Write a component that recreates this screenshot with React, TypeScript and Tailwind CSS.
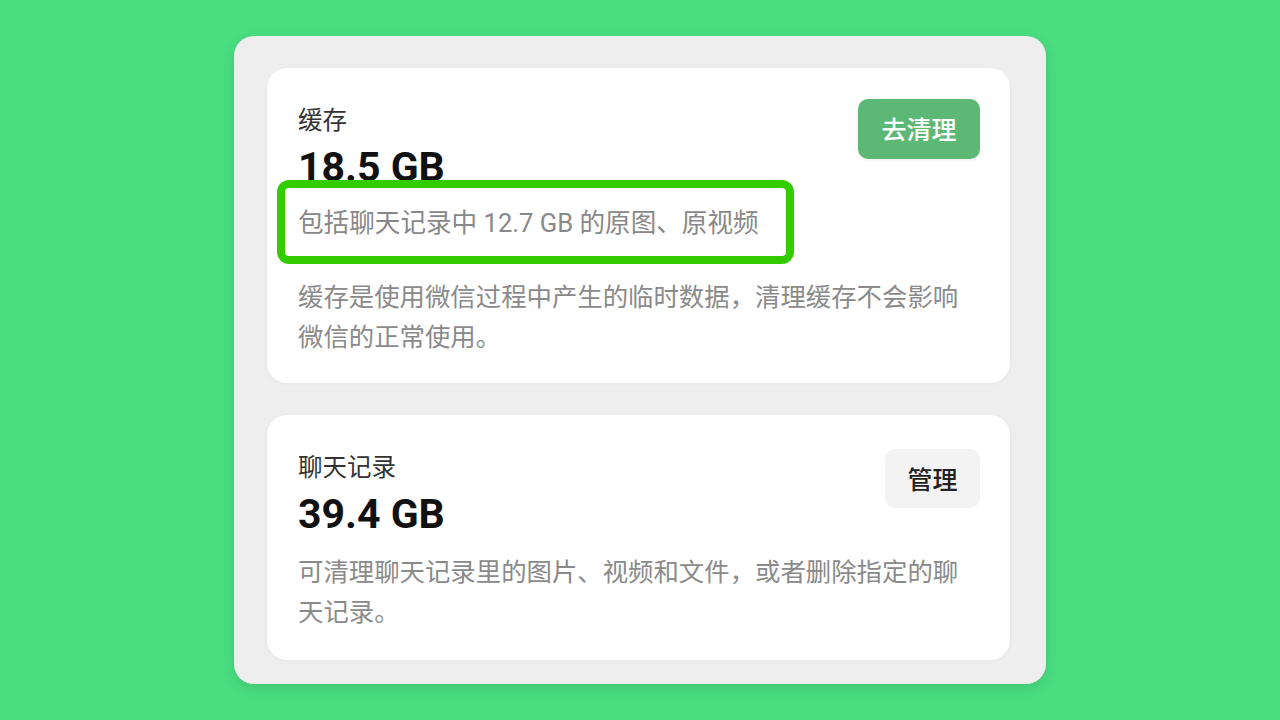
import React from 'react';

const cjk = "font-['Noto_Sans_CJK_SC',sans-serif]";

function StorageCard({
  title,
  size,
  action,
  primary,
  note,
  lines,
}: {
  title: string;
  size: string;
  action: string;
  primary?: boolean;
  note?: string;
  lines: string;
}) {
  return (
    <div
      className={`relative bg-white rounded-[20px] pl-[31px] pr-[30px] pt-[31px] ${
        note ? 'pb-[28px]' : 'pb-[30px]'
      } shadow-[0_1px_4px_rgba(0,0,0,0.04)]`}
    >
      <div className="flex items-start justify-between">
        <div>
          <div className="text-[24.5px] leading-[40px] mb-[4px] text-[#333]">{title}</div>
          <div className="font-['Roboto','Noto_Sans_CJK_SC',sans-serif] font-bold text-[41px] leading-[48px] text-[#111]">
            {size}
          </div>
        </div>
        {primary ? (
          <button className="w-[122px] h-[60px] rounded-[10px] bg-[#5cb874] text-white text-[25px] font-medium shadow-[0_1px_3px_rgba(0,0,0,0.08)]">
            {action}
          </button>
        ) : (
          <button className="mt-[3px] w-[95px] h-[59px] rounded-[10px] bg-[#f3f3f3] text-[#222] text-[25px] font-medium">
            {action}
          </button>
        )}
      </div>
      {note && (
        <>
          <div className="mt-[12px] font-['Roboto','Noto_Sans_CJK_SC',sans-serif] text-[25.6px] leading-[40px] text-[#888]">
            {note}
          </div>
          <div className="absolute left-[10px] top-[112px] w-[517px] h-[84px] rounded-[12px] border-[8px] border-[#33cc00]" />
        </>
      )}
      <p className={`${note ? 'mt-[32px]' : 'mt-[12px]'} max-w-[672px] text-[25.4px] leading-[40px] text-[#8a8a8a]`}>
        {lines}
      </p>
    </div>
  );
}

export default function App() {
  return (
    <div className={`min-h-screen w-full bg-[#4ade80] flex items-center justify-center ${cjk}`}>
      <div className="w-[812px] h-[648px] bg-[#eeeeee] rounded-[20px] pl-[33px] pr-[36px] pt-[32px] flex flex-col gap-[32px] shadow-[0_4px_14px_rgba(0,0,0,0.12)]">
        <StorageCard
          title="缓存"
          size="18.5 GB"
          action="去清理"
          primary
          note="包括聊天记录中 12.7 GB 的原图、原视频"
          lines="缓存是使用微信过程中产生的临时数据，清理缓存不会影响微信的正常使用。"
        />
        <StorageCard
          title="聊天记录"
          size="39.4 GB"
          action="管理"
          lines="可清理聊天记录里的图片、视频和文件，或者删除指定的聊天记录。"
        />
      </div>
    </div>
  );
}
